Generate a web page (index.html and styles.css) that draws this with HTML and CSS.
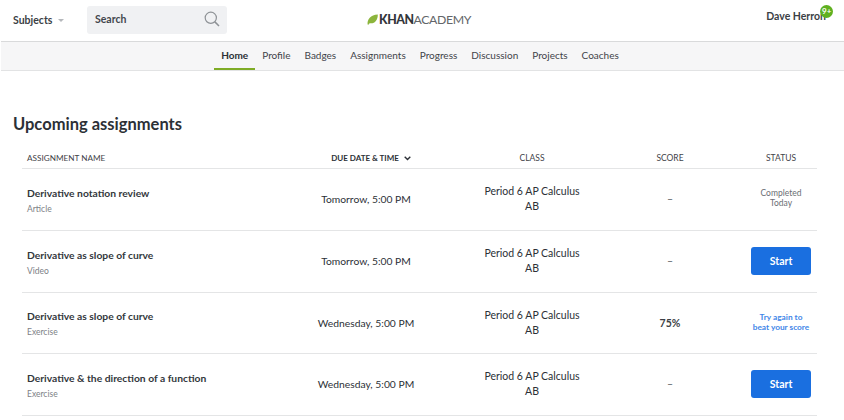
FILE: index.html
```html
<!DOCTYPE html>
<html lang="en">
<head>
    <meta charset="UTF-8">
    <title>Upcoming assignments | Khan Academy</title>
    <link rel="stylesheet" href="styles.css">
</head>
<body>
    <header class="topbar">
        <div class="topbar-left">
            <a class="subjects">Subjects <span class="caret"></span></a>
            <div class="search">
                <span>Search</span>
                <svg class="search-icon" width="16" height="16" viewBox="0 0 16 16" fill="none" stroke="#8e9296" stroke-width="1.2">
                    <circle cx="6.8" cy="6.8" r="5.6"/>
                    <path d="M10.9 10.9 L15 15" stroke-width="1.5"/>
                </svg>
            </div>
        </div>
        <div class="logo">
            <svg class="leaf" width="11" height="11" viewBox="0 0 11 11">
                <path d="M0.6 10.6 C0 5.5 3.5 0.8 10.8 0.4 C11 6 7.5 10.2 2.6 9.2 L1.4 10.8 Z" fill="#8cb53c"/>
            </svg>
            <span class="logo-text"><b>KHAN</b>ACADEMY</span>
        </div>
        <div class="user">
            Dave Herron
            <span class="badge">9+</span>
        </div>
    </header>

    <nav class="tabs">
        <a class="tab active">Home</a>
        <a class="tab">Profile</a>
        <a class="tab">Badges</a>
        <a class="tab">Assignments</a>
        <a class="tab">Progress</a>
        <a class="tab">Discussion</a>
        <a class="tab">Projects</a>
        <a class="tab">Coaches</a>
    </nav>

    <main class="content">
        <h1>Upcoming assignments</h1>
        <div class="assignments">
            <div class="row head">
                <div class="name-col">ASSIGNMENT NAME</div>
                <div class="sorted">DUE DATE &amp; TIME
                    <svg class="sort-icon" width="7" height="5" viewBox="0 0 7 5" fill="none" stroke="#2c3036" stroke-width="1.4"><path d="M0.7 0.8 L3.5 3.6 L6.3 0.8"/></svg>
                </div>
                <div>CLASS</div>
                <div>SCORE</div>
                <div class="status">STATUS</div>
            </div>

            <div class="row">
                <div class="name-col"><div class="title">Derivative notation review</div><div class="kind">Article</div></div>
                <div class="due">Tomorrow, 5:00 PM</div>
                <div class="class-name">Period 6 AP Calculus AB</div>
                <div class="score">–</div>
                <div class="status completed">Completed Today</div>
            </div>

            <div class="row">
                <div class="name-col"><div class="title">Derivative as slope of curve</div><div class="kind">Video</div></div>
                <div class="due">Tomorrow, 5:00 PM</div>
                <div class="class-name">Period 6 AP Calculus AB</div>
                <div class="score">–</div>
                <div class="status"><button class="start">Start</button></div>
            </div>

            <div class="row short">
                <div class="name-col"><div class="title">Derivative as slope of curve</div><div class="kind">Exercise</div></div>
                <div class="due">Wednesday, 5:00 PM</div>
                <div class="class-name">Period 6 AP Calculus AB</div>
                <div class="score strong">75%</div>
                <div class="status"><a class="retry">Try again to beat your score</a></div>
            </div>

            <div class="row">
                <div class="name-col"><div class="title">Derivative &amp; the direction of a function</div><div class="kind">Exercise</div></div>
                <div class="due">Wednesday, 5:00 PM</div>
                <div class="class-name">Period 6 AP Calculus AB</div>
                <div class="score">–</div>
                <div class="status"><button class="start">Start</button></div>
            </div>
        </div>
    </main>
</body>
</html>
```

FILE: styles.css
```css
body {
    font-family: Lato, "Open Sans", Arial, sans-serif;
    margin: 0;
    padding: 0;
    background-color: #fff;
    color: #2c3036;
    overflow: hidden;
}

.topbar {
    display: flex;
    justify-content: space-between;
    height: 41px;
    position: relative;
}

.topbar-left {
    display: flex;
    align-items: center;
    padding: 0 0 1px 13px;
}

.subjects {
    font-size: 10.5px;
    font-weight: 700;
    color: #3b3f45;
    width: 74px;
    margin-top: -1px;
    display: flex;
    align-items: center;
    gap: 6px;
}

.caret {
    border-left: 3px solid transparent;
    border-right: 3px solid transparent;
    border-top: 3px solid #b5b8bc;
    margin-top: 2px;
}

.search {
    width: 140px;
    height: 28px;
    box-sizing: border-box;
    padding: 0 7px 2px 8px;
    background-color: #f0f1f3;
    border-radius: 3px;
    display: flex;
    align-items: center;
    justify-content: space-between;
    font-size: 10.5px;
    font-weight: 700;
    color: #43474d;
}

.logo {
    position: absolute;
    left: 367px;
    top: 13px;
    display: flex;
    align-items: center;
    gap: 1px;
}

.logo-text {
    font-size: 12.3px;
    line-height: 13px;
    font-weight: 400;
    color: #626569;
    letter-spacing: -0.4px;
}

.logo-text b {
    font-weight: 900;
    color: #33363a;
}

.user {
    font-size: 10.5px;
    font-weight: 700;
    color: #3b3f45;
    padding: 10px 18px 0 0;
    position: relative;
}

.badge {
    position: absolute;
    left: 54px;
    top: 5px;
    width: 13px;
    height: 13px;
    border-radius: 50%;
    background-color: #5fb01f;
    color: #fff;
    font-size: 8px;
    line-height: 13px;
    text-align: center;
}

.tabs {
    display: flex;
    justify-content: center;
    height: 28px;
    margin-left: 1px;
    padding-right: 5px;
    background-color: #f6f6f7;
    border-top: 1px solid #d9dadb;
    border-bottom: 1px solid #e2e3e4;
}

.tab {
    font-size: 10px;
    line-height: 27px;
    color: #3f4349;
    padding: 0 7px;
    height: 28px;
    box-sizing: border-box;
}

.tab.active {
    font-weight: 700;
    color: #2c3036;
    border-bottom: 2px solid #7fac26;
}

.content {
    padding: 0 27px 0 13px;
}

h1 {
    margin: 43px 0 0;
    font-size: 16.5px;
    line-height: 20px;
    font-weight: 700;
    color: #2c3036;
}

.assignments {
    margin: 14px 0 0 9px;
}

.row {
    display: grid;
    grid-template-columns: 258px 172px 160px 116px 89px;
    align-items: center;
    text-align: center;
    height: 60px;
    padding-bottom: 1px;
    border-bottom: 1px solid #e4e5e6;
    font-size: 10.5px;
}

.row.short {
    height: 59px;
}

.row.head {
    height: 21px;
    padding-bottom: 0;
    box-sizing: border-box;
    font-size: 8.5px;
    color: #3f4349;
}

.row.head .name-col {
    font-size: 8.2px;
    padding-top: 0;
}

.sorted {
    font-size: 8px;
    font-weight: 700;
    color: #2c3036;
    padding-left: 10px;
}

.sort-icon {
    margin-left: 3px;
}

.name-col {
    text-align: left;
    padding: 2px 0 0 5px;
}

.title {
    font-size: 10.3px;
    font-weight: 700;
    color: #33373c;
}

.kind {
    font-size: 8.5px;
    color: #7d8186;
    margin-top: 5px;
}

.due {
    font-size: 10.3px;
}

.class-name {
    width: 104px;
    margin: auto;
    line-height: 15px;
}

.score {
    color: #5b5f64;
}

.score.strong {
    font-weight: 700;
    color: #3b3f45;
}

.status {
    padding-left: 17px;
}

.completed {
    font-size: 8.5px;
    line-height: 10px;
    color: #6a6e73;
    padding: 0 10px 2px 27px;
}

.start {
    width: 60px;
    height: 28px;
    border: none;
    border-radius: 3px;
    background-color: #1a6fe0;
    color: #fff;
    font-family: inherit;
    font-size: 10.5px;
    font-weight: 700;
    cursor: pointer;
}

.retry {
    display: block;
    width: 60px;
    margin: 0 auto 2px;
    font-size: 8.3px;
    line-height: 10px;
    font-weight: 700;
    color: #3f86e8;
}
```
